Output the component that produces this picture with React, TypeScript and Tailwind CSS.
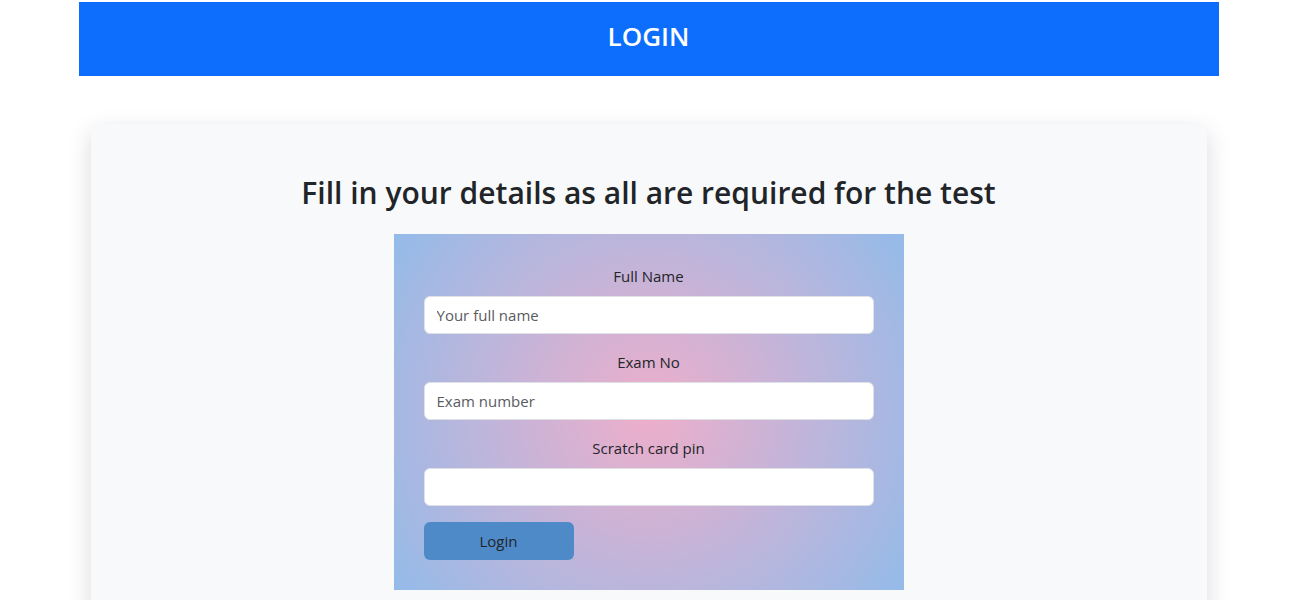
const fields = [
  { label: "Full Name", placeholder: "Your full name" },
  { label: "Exam No", placeholder: "Exam number" },
  { label: "Scratch card pin", placeholder: "" },
];

const App = () => {
  return (
    <div className="min-h-[720px] bg-white text-[#212529] font-['Open_Sans',sans-serif]">
      <div className="w-[1297px]">
        <div className="max-w-[1140px] mx-auto pt-[2px]">
          <header className="bg-[#0d6efd] h-[74px] flex items-center justify-center pb-[6px]">
            <h1 className="text-white text-[26px] font-semibold">LOGIN</h1>
          </header>

          <div className="mx-3 mt-[48px] bg-[#f8f9fa] rounded-lg shadow-[0_0.5rem_1.5rem_rgba(0,0,0,0.15)] pt-[50px] pb-10">
            <h2 className="text-center text-[30px] font-semibold leading-[38px]">
              Fill in your details as all are required for the test
            </h2>

            <form className="mx-auto mt-[22px] w-[510px] px-[30px] pt-[30px] pb-[30px] bg-[radial-gradient(circle,#eeaeca_0%,#94bbe9_100%)]">
              {fields.map((f) => (
                <div key={f.label} className="mb-4">
                  <label className="block text-center text-[15px] leading-6 mb-2">{f.label}</label>
                  <input
                    type="text"
                    placeholder={f.placeholder}
                    className="w-full h-[38px] bg-white border border-[#dee2e6] rounded-md px-3 text-[15px] placeholder:text-[#595c5f] outline-none"
                  />
                </div>
              ))}
              <button
                type="button"
                className="w-[150px] h-[38px] bg-[#4e89c8] rounded-md text-[15px] text-[#212529]"
              >
                Login
              </button>
            </form>
          </div>
        </div>
      </div>
    </div>
  );
};

export default App;
